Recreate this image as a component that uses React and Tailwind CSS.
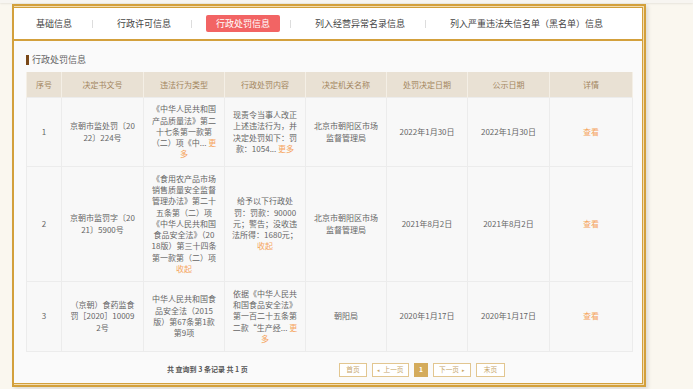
import React from 'react';

const GOLD = 'border-[#d3a03c]';

const tabs = ['基础信息', '行政许可信息', '行政处罚信息', '列入经营异常名录信息', '列入严重违法失信名单（黑名单）信息'];

const headers = ['序号', '决定书文号', '违法行为类型', '行政处罚内容', '决定机关名称', '处罚决定日期', '公示日期', '详情'];
const widths = [35, 82, 81, 81, 81, 81, 82, 83];

// 每行文字手动断行，保持与原图一致
const rows = [
  {
    h: 'h-[69px]',
    no: '1',
    doc: ['京朝市监处罚〔20', '22〕224号'],
    type: ['《中华人民共和国', '产品质量法》第二', '十七条第一款第', ['（二）项《中... ', '更'], [null, '多']],
    content: ['现责令当事人改正', '上述违法行为，并', '决定处罚如下：罚', ['款：1054... ', '更多']],
    org: ['北京市朝阳区市场', '监督管理局'],
    date: '2022年1月30日',
    pub: '2022年1月30日',
  },
  {
    h: 'h-[115px]',
    no: '2',
    doc: ['京朝市监罚字〔20', '21〕5900号'],
    type: ['《食用农产品市场', '销售质量安全监督', '管理办法》第二十', '五条第（二）项', '《中华人民共和国', '食品安全法》（20', '18版）第三十四条', '第一款第（二）项', [null, '收起']],
    content: ['给予以下行政处', '罚：罚款：90000', '元；警告；没收违', '法所得：1680元；', [null, '收起']],
    org: ['北京市朝阳区市场', '监督管理局'],
    date: '2021年8月2日',
    pub: '2021年8月2日',
  },
  {
    h: 'h-[70px]',
    no: '3',
    doc: ['（京朝）食药监食', '罚［2020］10009', '2号'],
    type: ['中华人民共和国食', '品安全法（2015', '版）第67条第1款', '第9项'],
    content: ['依据《中华人民共', '和国食品安全法》', '第一百二十五条第', ['二款“生产经... ', '更'], [null, '多']],
    org: ['朝阳局'],
    date: '2020年1月17日',
    pub: '2020年1月17日',
  },
];

const Lines = ({ lines }) => (
  <div>
    {lines.map((l, i) =>
      Array.isArray(l) ? (
        <span key={i} className="block whitespace-nowrap">
          {l[0]}
          <span className="text-[#f6a55e]">{l[1]}</span>
        </span>
      ) : (
        <span key={i} className="block whitespace-nowrap">{l}</span>
      )
    )}
  </div>
);

const PageBtn = ({ children, w, active }) => (
  <div
    className={`h-[14px] ${w} flex items-center justify-center text-[6.7px] leading-none border ${
      active ? 'bg-[#d4ab5b] border-[#d4ab5b] text-white font-bold' : 'border-[#e2c690] text-[#c7a66a] bg-white'
    }`}
  >
    {children}
  </div>
);

export default function App() {
  return (
    <div
      className="w-[693px] h-[389px] overflow-hidden bg-[#faf7ef] text-[#666]"
      style={{ fontFamily: '"Noto Sans CJK SC", "Noto Sans", sans-serif' }}
    >
      <div className="h-[3px] bg-[#f7f5f1] shadow-[0_1px_2px_rgba(0,0,0,0.08)]" />
      <div className="pl-[12px] pt-[1px]">
        {/* 外框 */}
        <div className={`w-[634px] h-[383px] border-2 ${GOLD} bg-[#f2ddb2] pt-px pr-px pb-px shadow-[2px_2px_4px_rgba(0,0,0,0.12)]`}>
          <div className={`h-full border-t border-r border-b ${GOLD} bg-[#fafafa] flex flex-col`}>
            {/* 标签栏 */}
            <div className={`h-[33px] shrink-0 bg-white border-b-2 ${GOLD} flex items-center pl-[12px] text-[9px] text-[#444]`}>
              {tabs.map((t, i) => (
                <React.Fragment key={t}>
                  {i > 0 && (
                    <span className={`w-px h-[8px] bg-[#dddddd] ml-[10px] ${i === 3 ? 'mr-[14px]' : 'mr-[14px]'}`} />
                  )}
                  <span
                    className={`px-[10px] h-[17px] leading-[17px] whitespace-nowrap rounded-[2px] ${
                      i === 2 ? 'bg-[#f26464] text-white' : ''
                    }`}
                  >
                    {t}
                  </span>
                </React.Fragment>
              ))}
            </div>

            {/* 内容 */}
            <div className="pl-[12px] pt-[13px]">
              <div className="flex items-center h-[12px] text-[9px] text-[#666]">
                <span className="w-[2.5px] h-[10px] bg-[#7a4817] mr-[3.5px]" />
                行政处罚信息
              </div>

              <table className="mt-[6px] w-[606px] table-fixed border-collapse text-[8px] leading-[11.3px] text-center">
                <colgroup>
                  {widths.map((w, i) => (
                    <col key={i} style={{ width: w }} />
                  ))}
                </colgroup>
                <thead>
                  <tr className="h-[25px] bg-[#e9e1d4] text-[#a3855e]">
                    {headers.map((h) => (
                      <th key={h} className="font-normal border-x border-[#f4efe6] p-0 align-middle">
                        {h}
                      </th>
                    ))}
                  </tr>
                </thead>
                <tbody>
                  {rows.map((r) => (
                    <tr key={r.no} className={`${r.h} bg-[#f8f8f8]`}>
                      <td className="border border-[#ececec] p-0 align-middle">{r.no}</td>
                      <td className="border border-[#ececec] p-0 align-middle"><Lines lines={r.doc} /></td>
                      <td className="border border-[#ececec] p-0 align-middle"><Lines lines={r.type} /></td>
                      <td className="border border-[#ececec] p-0 align-middle"><Lines lines={r.content} /></td>
                      <td className="border border-[#ececec] p-0 align-middle"><Lines lines={r.org} /></td>
                      <td className="border border-[#ececec] p-0 align-middle">{r.date}</td>
                      <td className="border border-[#ececec] p-0 align-middle">{r.pub}</td>
                      <td className="border border-[#ececec] p-0 align-middle text-[#f6a55e]">查看</td>
                    </tr>
                  ))}
                </tbody>
              </table>

              {/* 分页 */}
              <div className="flex items-center mt-[11px] h-[14px]">
                <span className="ml-[141px] w-[80px] whitespace-nowrap text-[7px] font-bold text-[#555]">
                  共 查询到 3 条记录 共 1 页
                </span>
                <div className="ml-[92px] flex items-center gap-[5px]">
                  <PageBtn w="w-[28px]">首页</PageBtn>
                  <PageBtn w="w-[37px]"><span className="text-[5px] mr-[3px]">◂</span>上一页</PageBtn>
                  <PageBtn w="w-[14px]" active>1</PageBtn>
                  <PageBtn w="w-[38px]">下一页<span className="text-[5px] ml-[3px]">▸</span></PageBtn>
                  <PageBtn w="w-[29px]">末页</PageBtn>
                </div>
              </div>
            </div>
          </div>
        </div>
      </div>
    </div>
  );
}
